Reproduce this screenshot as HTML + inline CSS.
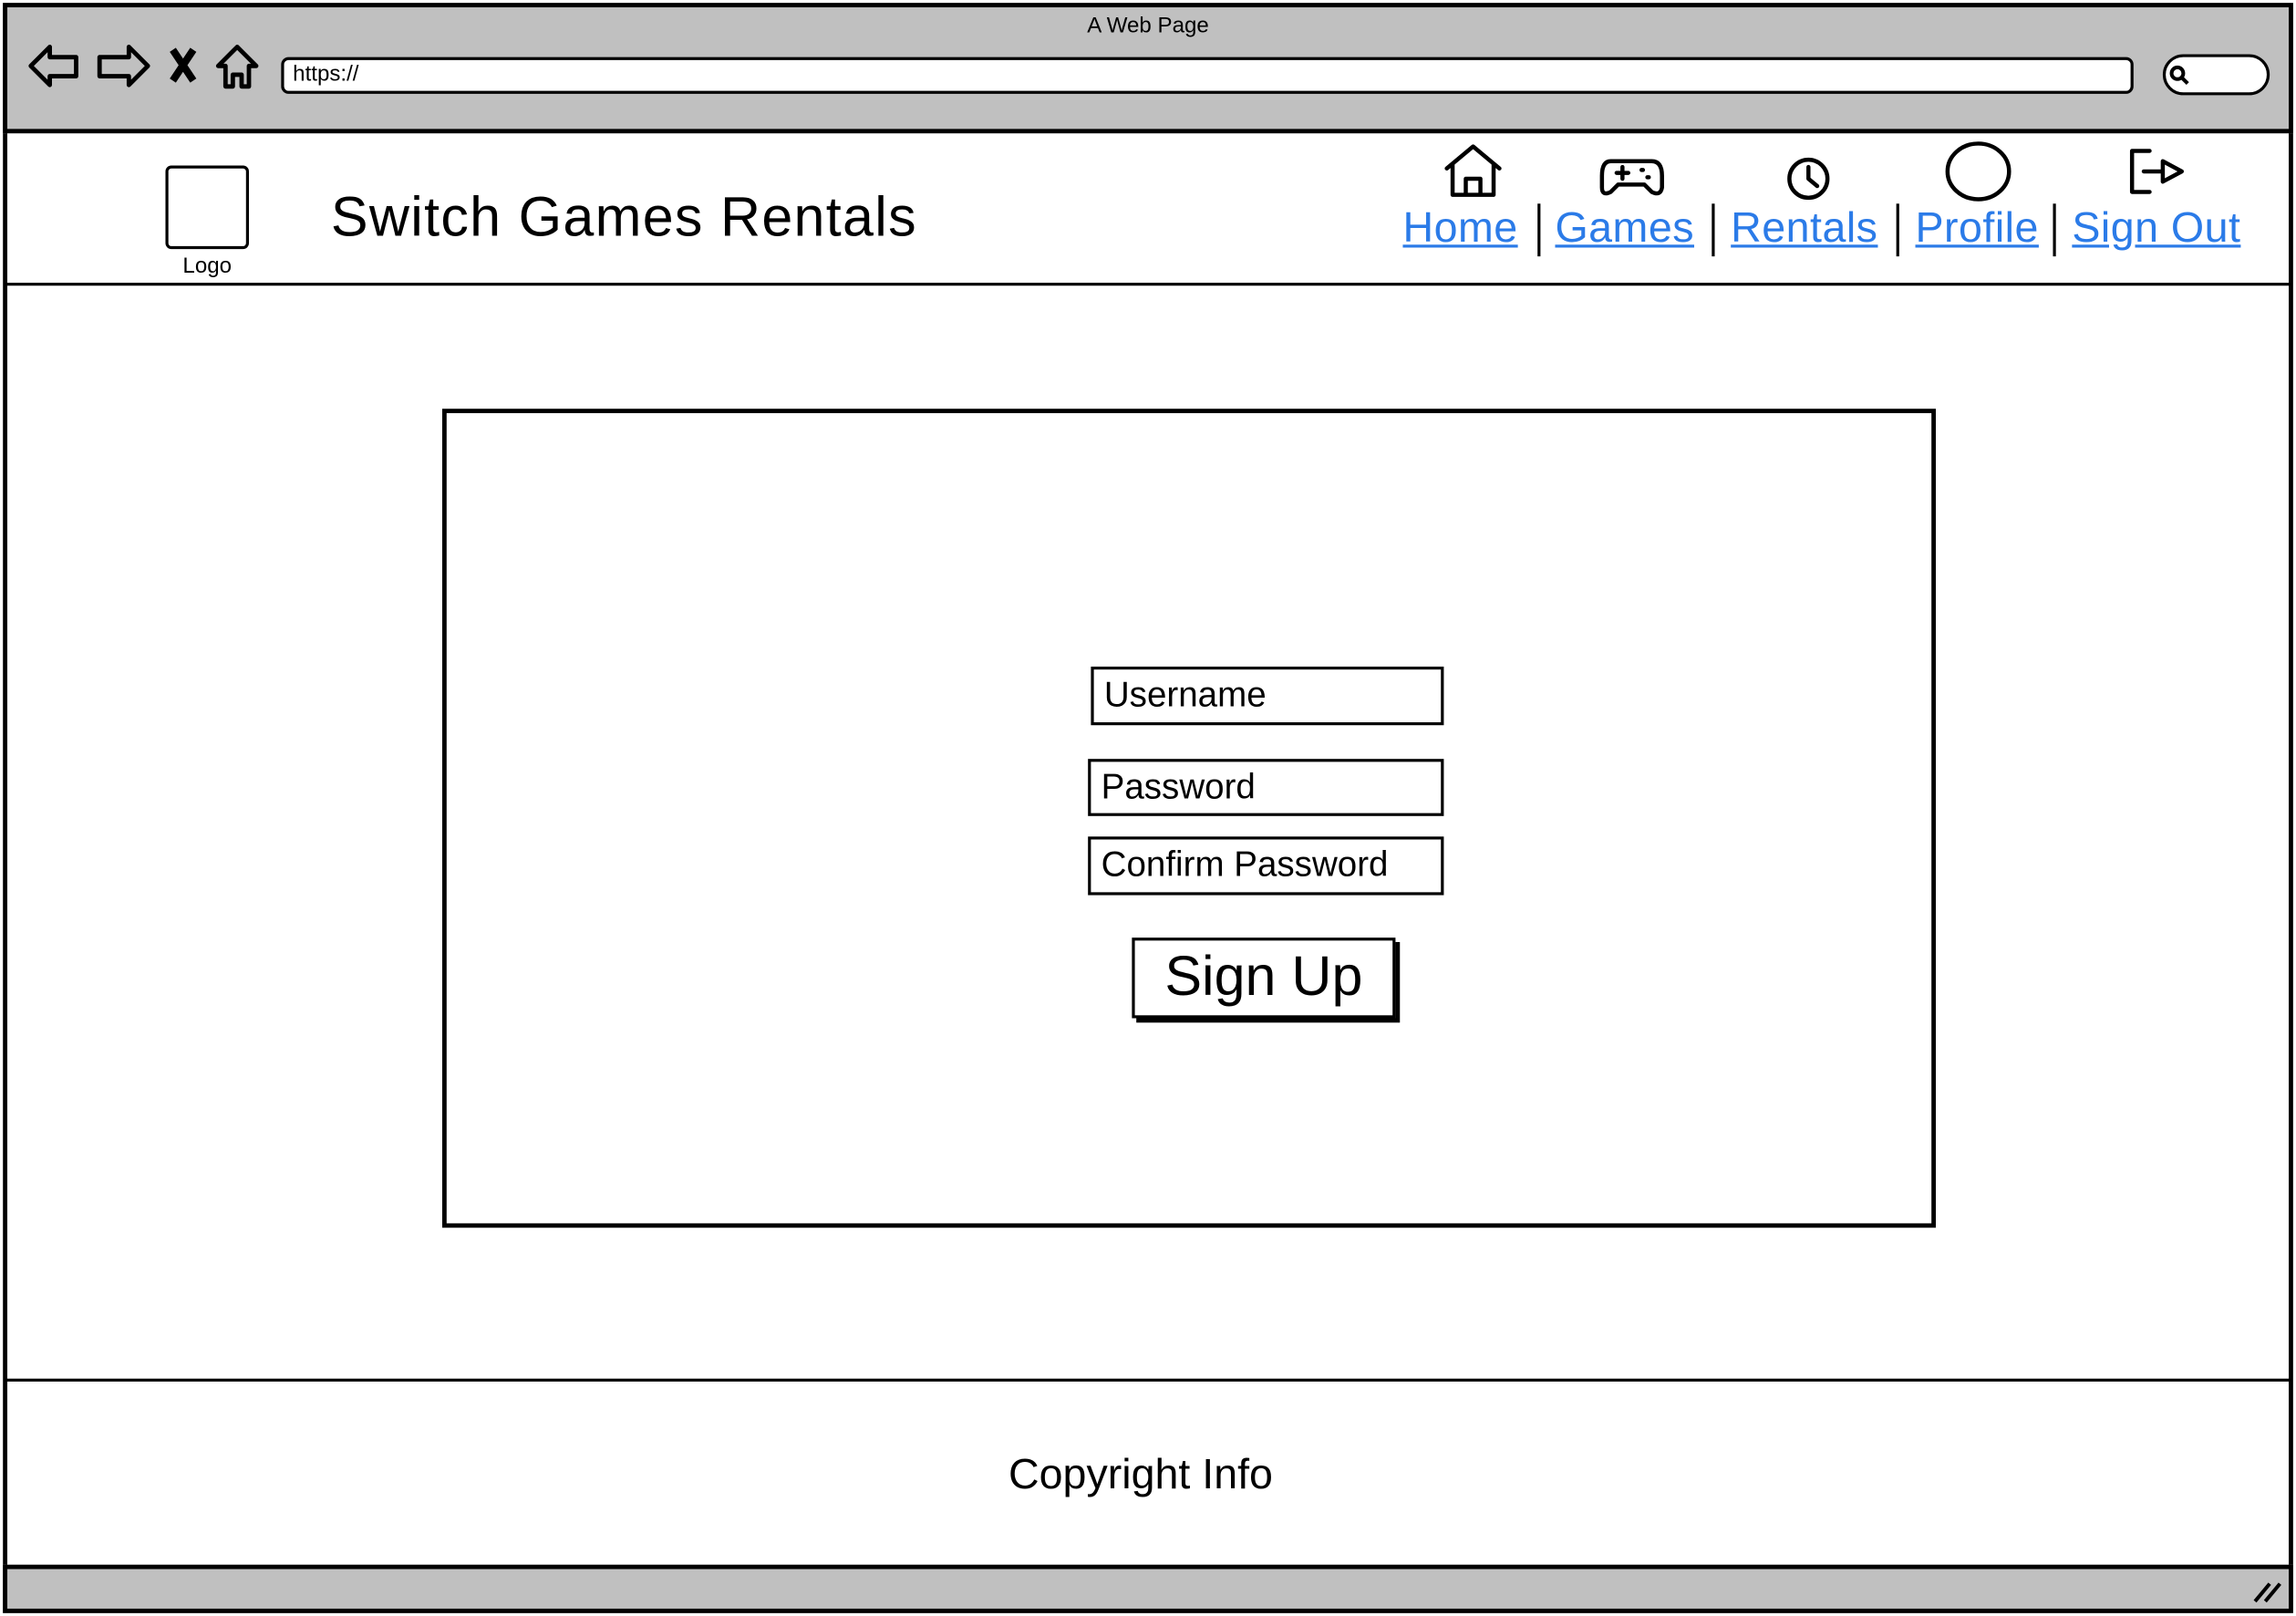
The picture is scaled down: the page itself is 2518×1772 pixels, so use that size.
<!DOCTYPE html>
<html><head><meta charset="utf-8">
<style>
html,body{margin:0;padding:0;background:#fff;overflow:hidden;width:2518px;height:1772px}
#s{position:absolute;left:0;top:0;width:1568px;height:1103px;transform-origin:0 0;transform:scale(1.6059,1.6065);font-family:"Liberation Sans",sans-serif;color:#000}
.a{position:absolute}
.nav{position:absolute;top:140px;font-size:29px;color:#2b7be8;text-decoration:underline;white-space:nowrap;letter-spacing:0.3px}
.sep{position:absolute;top:139px;width:2px;height:36px;background:#000}
.inp{position:absolute;border:2.5px solid #000;box-sizing:border-box;font-size:24px;padding-left:7px;line-height:35px}
</style></head><body>
<div id="s">
<div class="a" style="left:2px;top:2px;width:1564px;height:1099px;border:3px solid #000;box-sizing:border-box"></div>
<div class="a" style="left:2px;top:2px;width:1564px;height:89px;background:#c0c0c0;border:3px solid #000;box-sizing:border-box"></div>
<div class="a" style="left:0;width:1568px;top:9px;text-align:center;font-size:15px">A Web Page</div>
<svg class="a" style="left:15px;top:25px" width="170" height="45" viewBox="0 0 170 45" fill="none" stroke="#000" stroke-width="3" stroke-linejoin="round">
<path d="M6 20 L19 7 L19 14 L37 14 L37 27 L19 27 L19 33 Z"/>
<path d="M86 20 L73 7 L73 14 L53 14 L53 27 L73 27 L73 33 Z"/>
<path d="M103 9 L117 30 M117 9 L103 30" stroke-width="5"/>
<path d="M134 20 L147 7 L160 20 L155 20 L155 34 L150 34 L150 26 L144 26 L144 34 L139 34 L139 20 Z"/>
</svg>
<div class="a" style="left:192px;top:39px;width:1265px;height:25px;background:#fff;border:2.5px solid #000;border-radius:5px;box-sizing:border-box;font-size:15px;padding-left:6px;line-height:20px">https://</div>
<div class="a" style="left:1477px;top:37px;width:73px;height:28px;background:#fff;border:2.5px solid #000;border-radius:14px;box-sizing:border-box"></div>
<svg class="a" style="left:1480px;top:43px" width="16" height="16"><circle cx="7" cy="7" r="4" fill="none" stroke="#000" stroke-width="2.5"/><path d="M10 10 L14 14" stroke="#000" stroke-width="2.5"/></svg>

<div class="a" style="left:113px;top:113px;width:57px;height:57px;border:2px solid #000;border-radius:4px;box-sizing:border-box"></div>
<div class="a" style="left:113px;width:57px;top:173px;text-align:center;font-size:15px">Logo</div>
<div class="a" style="left:226px;top:128px;font-size:38px;letter-spacing:0.8px">Switch Games Rentals</div>

<svg class="a" style="left:980px;top:95px" width="570" height="45" fill="none" stroke="#000" stroke-width="2.8" stroke-linejoin="round" stroke-linecap="round">
<path d="M8 20 L26 5 L44 20 M12 17 L12 38 L40 38 L40 17 M21 38 L21 27 L31 27 L31 38"/>
<path d="M120 15 L148 15 Q155 15 155 25 L155 33 Q154 39 148 36 L143 31 L125 31 L120 36 Q114 39 114 33 L114 25 Q114 15 120 15 Z M124 23 L132 23 M128 19 L128 27 M141 21 L142 21 M145 26 L146 26"/>
<circle cx="255" cy="27" r="13"/><path d="M255 19 L255 27 L261 32"/>
<ellipse cx="371" cy="22" rx="21" ry="19"/>
<path d="M488 8 L476 8 L476 36 L488 36 M484 22 L497 22 L497 15 L510 22 L497 29 L497 22"/>
</svg>
<div class="nav" style="left:958px">Home</div>
<div class="sep" style="left:1050px"></div>
<div class="nav" style="left:1062px">Games</div>
<div class="sep" style="left:1169px"></div>
<div class="nav" style="left:1182px">Rentals</div>
<div class="sep" style="left:1295px"></div>
<div class="nav" style="left:1308px">Profile</div>
<div class="sep" style="left:1402px"></div>
<div class="nav" style="left:1415px">Sign Out</div>
<div class="a" style="left:4px;top:193px;width:1560px;height:2px;background:#000"></div>

<div class="a" style="left:302px;top:279px;width:1020px;height:559px;border:3px solid #000;box-sizing:border-box"></div>
<div class="inp" style="left:745px;top:455px;width:241px;height:40px">Username</div>
<div class="inp" style="left:743px;top:518px;width:243px;height:39px">Password</div>
<div class="inp" style="left:743px;top:571px;width:243px;height:40px">Confirm Password</div>
<div class="a" style="left:773px;top:640px;width:180px;height:55px;border:2.5px solid #000;box-sizing:border-box;box-shadow:3px 3px 0 #000;text-align:center;font-size:38px;line-height:50px">Sign Up</div>

<div class="a" style="left:4px;top:941px;width:1560px;height:2px;background:#000"></div>
<div class="a" style="left:0;width:1558px;top:991px;text-align:center;font-size:29px">Copyright Info</div>
<div class="a" style="left:2px;top:1068px;width:1564px;height:33px;background:#c0c0c0;border:3px solid #000;box-sizing:border-box"></div>
<svg class="a" style="left:1538px;top:1077px" width="22" height="18"><path d="M2 16 L12 4 M9 16 L19 4" stroke="#000" stroke-width="2.5"/></svg>
</div>
</body></html>
